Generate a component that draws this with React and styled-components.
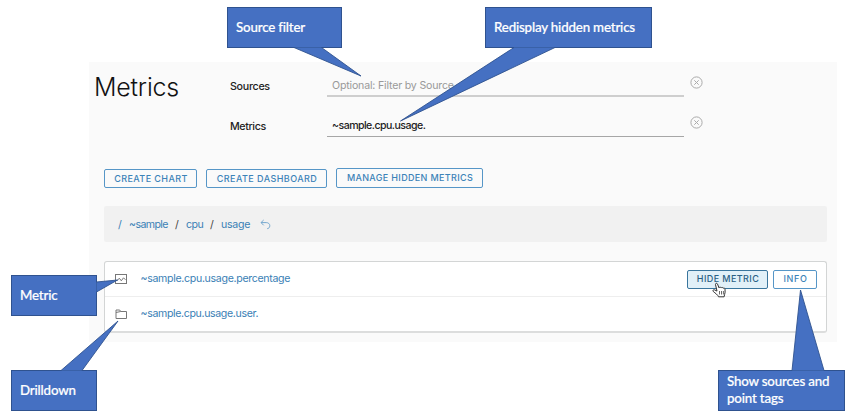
import React from 'react';
import styled, { createGlobalStyle } from 'styled-components';

const GlobalStyle = createGlobalStyle`
  * { box-sizing: border-box; }
  body { margin: 0; background: #fff; }
`;

const Stage = styled.div`
  position: relative;
  width: 853px;
  height: 418px;
  padding: 62px 16px 0 89px;
  overflow: hidden;
  font-family: Inter, 'Liberation Sans', sans-serif;
`;

const Panel = styled.main`
  display: flex;
  flex-direction: column;
  height: 280px;
  padding: 0 10px 0 15px;
  background: #fafafa;
`;

const Header = styled.header`
  display: flex;
  height: 106px;
  margin-left: -10px;
`;

const Title = styled.h1`
  flex: none;
  width: 136px;
  margin: 9px 0 0;
  font-size: 25px;
  font-weight: 300;
  line-height: 32px;
  letter-spacing: ${(p) => p.$tracking}px;
  color: #111;
`;

const Fields = styled.div`
  display: flex;
  flex-direction: column;
  gap: 6px;
`;

const Field = styled.label`
  display: flex;
  height: 34.5px;
`;

const FieldLabel = styled.span`
  width: 97px;
  padding-top: ${(p) => p.$top}px;
  font-size: 10.7px;
  line-height: 16px;
  font-weight: 500;
  letter-spacing: ${(p) => p.$tracking}px;
  color: #222;
`;

const Input = styled.input`
  width: 357px;
  height: ${(p) => (p.$thick ? 35 : 34)}px;
  padding: ${(p) => (p.$thick ? 13 : 12)}px 0 0 5px;
  border: 0;
  border-bottom: ${(p) => (p.$thick ? '2px solid #cecece' : '1px solid #a6a6a6')};
  border-radius: 0;
  outline: 0;
  background: transparent;
  font: ${(p) => (p.$thick ? 400 : 500)} 10.6px Inter, sans-serif;
  letter-spacing: ${(p) => p.$tracking}px;
  color: #222;
  &::placeholder { color: #999; opacity: 1; }
`;

const ClearIcon = styled.svg`
  width: 13px;
  height: 13px;
  margin: 13.900px 0 0 6px;
`;

const Actions = styled.div`
  display: flex;
  gap: 9px;
  height: 38px;
`;

const Button = styled.button`
  width: ${(p) => p.$width}px;
  height: ${(p) => (p.$tall ? 20 : 19)}px;
  margin-top: ${(p) => (p.$tall ? 0 : p.$drop || 0)}px;
  padding: 0 0 ${(p) => (p.$drop ? 0 : 2)}px 1px;
  border: 1px solid ${(p) => (p.$active ? '#39759d' : '#5696c7')};
  border-radius: 2px;
  background: ${(p) => (p.$active ? '#e1f0f8' : p.$bg || 'transparent')};
  font: 500 9px/15px Inter, sans-serif;
  letter-spacing: ${(p) => p.$tracking}px;
  white-space: nowrap;
  color: ${(p) => (p.$active ? '#2b6185' : '#3c83b8')};
`;

const Breadcrumb = styled.nav`
  display: flex;
  align-items: center;
  height: 36px;
  padding: 1px 0 0 14px;
  border-radius: 2px;
  background: #f1f1f1;
  font-size: 10.6px;
  color: #3a80b5;
`;

const Crumb = styled.span`
  width: ${(p) => p.$width}px;
  letter-spacing: ${(p) => p.$tracking || 0}px;
  color: ${(p) => (p.$dark ? '#444' : '#3a80b5')};
`;

const List = styled.section`
  height: 72px;
  margin-top: 19px;
  border: 1px solid #d3d5d5;
  border-bottom: 2px solid #dcdddd;
  border-radius: 3px;
  background: #fff;
`;

const Row = styled.div`
  display: flex;
  align-items: center;
  height: ${(p) => (p.$first ? 35 : 34)}px;
  padding: 0 9px 0 10px;
  border-bottom: ${(p) => (p.$first ? '1px solid #eee' : '0')};
`;

const RowIcon = styled.svg`
  width: 13px;
  height: 12px;
  margin-right: 12.500px;
`;

const MetricName = styled.span`
  flex: 1;
  padding-bottom: 1px;
  font-size: 10.6px;
  letter-spacing: ${(p) => p.$tracking}px;
  color: #3a80b5;
`;

const RowActions = styled.div`
  display: flex;
  gap: 5px;
`;

const Overlay = styled.svg`
  position: absolute;
  inset: 0;
  z-index: 2;
  pointer-events: none;
`;

const Callout = styled.aside`
  position: absolute;
  z-index: 1;
  left: ${(p) => p.$x}px;
  top: ${(p) => p.$y}px;
  width: ${(p) => p.$w}px;
  height: 41px;
  display: flex;
  align-items: center;
  padding: 0 0 1px 8px;
  border: 1px solid #2f528f;
  background: #4570c2;
  color: #fff;
  font: 500 13.3px/17px Lato, sans-serif;
  letter-spacing: -0.17px;
  -webkit-text-stroke: 0.2px #fff;
  white-space: pre;
`;

const tails = [
  'M294 47.5 L361 76 L321.5 47.5',
  'M514 47.5 L400.5 121 L555 47.5',
  'M96.5 282 L117.5 280 L96.5 292',
  'M61 370.5 L118 321 L82 370.5',
  'M792 370.5 L800.5 290 L824 370.5',
];

const Clear = () => (
  <ClearIcon viewBox="0 0 13 13" fill="none" stroke="#aaa">
    <circle cx="6.5" cy="6.5" r="5.6" />
    <path d="M4.3 4.3l4.4 4.4M8.7 4.3L4.3 8.7" />
  </ClearIcon>
);

export default function App() {
  return (
    <Stage>
      <GlobalStyle />
      <Panel>
        <Header>
          <Title $tracking={-0.2}>Metrics</Title>
          <Fields>
            <Field>
              <FieldLabel $top={17} $tracking={-0.3}>Sources</FieldLabel>
              <Input $thick $tracking={-0.18} placeholder="Optional: Filter by Source" />
              <Clear />
            </Field>
            <Field>
              <FieldLabel $top={16} $tracking={-0.4}>Metrics</FieldLabel>
              <Input $tracking={-0.55} defaultValue="~sample.cpu.usage." />
              <Clear />
            </Field>
          </Fields>
        </Header>
        <Actions>
          <Button $width={93} $drop={1} $tracking={0.4}>CREATE CHART</Button>
          <Button $width={121} $drop={1} $tracking={0.45}>CREATE DASHBOARD</Button>
          <Button $width={147} $tall $tracking={0.34}>MANAGE HIDDEN METRICS</Button>
        </Actions>
        <Breadcrumb>
          <Crumb $width={11}>/</Crumb>
          <Crumb $width={46} $tracking={-0.6}>~sample</Crumb>
          <Crumb $width={11} $dark>/</Crumb>
          <Crumb $width={24} $tracking={-0.5}>cpu</Crumb>
          <Crumb $width={11} $dark>/</Crumb>
          <Crumb $width={39} $tracking={-0.25}>usage</Crumb>
          <svg width="11" height="11" viewBox="0 0 11 11" fill="none" stroke="#76a8cf">
            <path d="M3.7 1L1 3.6l2.7 2.7M1 3.6h5.2c2.2 0 3.6 1.3 3.6 3.1 0 1.7-1 2.8-2.6 3" />
          </svg>
        </Breadcrumb>
        <List>
          <Row $first>
            <RowIcon viewBox="0 0 13 12" fill="none" stroke="#777">
              <rect x=".5" y="1.5" width="11" height="9" />
              <path d="M2 7.8l2.3-2.6 2 2.6 2.2-3 2 2" />
            </RowIcon>
            <MetricName $tracking={-0.32}>~sample.cpu.usage.percentage</MetricName>
            <RowActions>
              <Button $active $width={81} $tracking={0.4}>HIDE METRIC</Button>
              <Button $width={44} $bg="#fff" $tracking={0.6}>INFO</Button>
            </RowActions>
          </Row>
          <Row>
            <RowIcon viewBox="0 0 13 12" fill="none" stroke="#777">
              <path d="M1 10.5v-8.500h3.700l1 1.500h5.800v7zM1 4.500l4.700-1" />
            </RowIcon>
            <MetricName $tracking={-0.36}>~sample.cpu.usage.user.</MetricName>
          </Row>
        </List>
      </Panel>

      <Callout $x={227} $y={7} $w={115}>Source filter</Callout>
      <Callout $x={485} $y={7} $w={167}>Redisplay hidden metrics</Callout>
      <Callout $x={11} $y={275} $w={86}>Metric</Callout>
      <Callout $x={11} $y={370} $w={86}>Drilldown</Callout>
      <Callout $x={718} $y={370} $w={127}>{'Show sources and\npoint tags'}</Callout>

      <Overlay width="853" height="418">
        {tails.map((d) => (
          <path key={d} d={d} fill="#4570c2" stroke="#2f528f" strokeWidth="0.9" strokeLinejoin="round" />
        ))}
        <path
          d="M715.500 284.600c-.3-1.400 1.500-1.900 2-.6l1.500 3.900c.2-1 1.800-1.100 2.200 0 .5-.8 1.700-.6 2 .4.600-.6 1.700-.2 1.800.8l.1 3.100c0 1.700-.9 2.700-1 4.600h-5.600c-.5-1.900-3.300-3.600-5.200-5.300-1-1 .2-2.200 1.400-1.600l2.300 1.200z"
          fill="#fff"
          stroke="#333"
          strokeWidth="1"
          strokeLinejoin="round"
        />
        <path d="M719.500 291v3.500M721.500 291v3.500M723.400 291v3.500" stroke="#444" strokeWidth=".8" />
      </Overlay>
    </Stage>
  );
}
